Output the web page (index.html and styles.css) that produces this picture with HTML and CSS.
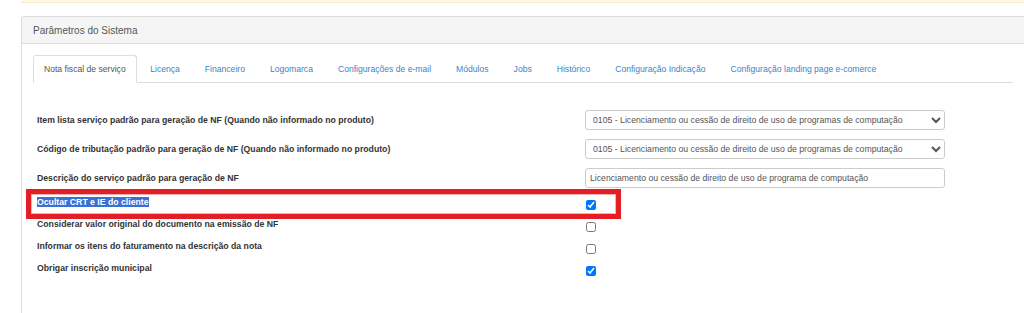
FILE: index.html
```html
<!DOCTYPE html>
<html lang="pt-BR">
<head>
    <meta charset="UTF-8">
    <meta name="viewport" content="width=device-width, initial-scale=1.0">
    <title>Parâmetros do Sistema</title>
    <link rel="stylesheet" href="styles.css">
</head>
<body>
    <div class="alert-strip"></div>

    <div class="panel">
        <div class="panel-heading">
            <span class="panel-title">Parâmetros do Sistema</span>
        </div>
        <div class="panel-body">
            <ul class="nav-tabs">
                <li class="active"><a href="#">Nota fiscal de serviço</a></li>
                <li><a href="#">Licença</a></li>
                <li><a href="#">Financeiro</a></li>
                <li><a href="#">Logomarca</a></li>
                <li><a href="#">Configurações de e-mail</a></li>
                <li><a href="#">Módulos</a></li>
                <li><a href="#">Jobs</a></li>
                <li><a href="#">Histórico</a></li>
                <li><a href="#">Configuração Indicação</a></li>
                <li><a href="#">Configuração landing page e-comerce</a></li>
            </ul>

            <form class="tab-content">
                <div class="form-row">
                    <label for="itemLista">Item lista serviço padrão para geração de NF (Quando não informado no produto)</label>
                    <select id="itemLista">
                        <option>0105 - Licenciamento ou cessão de direito de uso de programas de computação</option>
                    </select>
                </div>
                <div class="form-row">
                    <label for="codTrib">Código de tributação padrão para geração de NF (Quando não informado no produto)</label>
                    <select id="codTrib">
                        <option>0105 - Licenciamento ou cessão de direito de uso de programas de computação</option>
                    </select>
                </div>
                <div class="form-row last-field">
                    <label for="descServico">Descrição do serviço padrão para geração de NF</label>
                    <input type="text" id="descServico" value="Licenciamento ou cessão de direito de uso de programa de computação">
                </div>
                <div class="check-row">
                    <label for="ocultarCrt"><span class="selected-text">Ocultar CRT e IE do cliente</span></label>
                    <input type="checkbox" id="ocultarCrt" checked>
                </div>
                <div class="check-row">
                    <label for="valorOriginal">Considerar valor original do documento na emissão de NF</label>
                    <input type="checkbox" id="valorOriginal">
                </div>
                <div class="check-row">
                    <label for="itensFat">Informar os itens do faturamento na descrição da nota</label>
                    <input type="checkbox" id="itensFat">
                </div>
                <div class="check-row">
                    <label for="inscMunicipal">Obrigar inscrição municipal</label>
                    <input type="checkbox" id="inscMunicipal" checked>
                </div>
            </form>
        </div>
    </div>

    <div class="highlight-box"></div>
</body>
</html>
```

FILE: styles.css
```css
body {
    margin: 0;
    font-family: "Liberation Sans", Arial, sans-serif;
    color: #333;
    background: #fff;
    overflow: hidden;
    position: relative;
    height: 313px;
}
.alert-strip {
    margin-left: 21px;
    height: 2px;
    background-color: #fcf8e3;
    border-bottom: 1px solid #faebcc;
}
.panel {
    margin: 13px 0 0 21px;
    height: 296px;
    border: 1px solid #ddd;
    border-right: none;
    border-bottom: none;
    border-radius: 3px 0 0 0;
}
.panel-heading {
    height: 26px;
    padding: 0 11px;
    background-color: #f5f5f5;
    border-bottom: 1px solid #ddd;
    display: flex;
    align-items: center;
}
.panel-title {
    font-size: 10px;
    color: #555;
}
.panel-body {
    padding: 11px 11px 0 11px;
}
.nav-tabs {
    list-style: none;
    margin: 0;
    padding: 0;
    display: flex;
    border-bottom: 1px solid #ddd;
}
.nav-tabs li {
    margin-right: 2px;
    margin-bottom: -1px;
}
.nav-tabs a {
    display: block;
    padding: 6.5px 10.5px 7.5px;
    line-height: 12px;
    font-size: 8.6px;
    color: #3d84c6;
    text-decoration: none;
    border: 1px solid transparent;
    border-radius: 3px 3px 0 0;
}
.nav-tabs .active a {
    padding-left: 10px;
    padding-right: 10px;
    color: #555;
    background-color: #fff;
    border-color: #ddd;
    border-bottom-color: transparent;
}
.tab-content {
    padding: 27px 0 0 4px;
}
.form-row {
    display: grid;
    grid-template-columns: 548px 360px;
    align-items: center;
    height: 20px;
    margin-bottom: 9px;
}
.form-row.last-field {
    margin-bottom: 4px;
}
label {
    font-size: 8.7px;
    font-weight: bold;
    color: #333;
    line-height: 12px;
}
select,
input[type="text"] {
    font-family: "Liberation Sans", Arial, sans-serif;
    font-size: 8.7px;
    color: #555;
    height: 20px;
    box-sizing: border-box;
    border: 1px solid #ccc;
    border-radius: 3px;
    background-color: #fff;
    margin: 0;
}
select {
    padding: 0 3px;
}
input[type="text"] {
    padding: 0 4px;
}
.check-row {
    display: grid;
    grid-template-columns: 548px 360px;
    align-items: start;
    height: 22px;
}
.check-row label {
    padding-top: 4px;
}
.check-row input[type="checkbox"] {
    width: 9.5px;
    height: 9.5px;
    margin: 8px 0 0 1px;
}
.selected-text {
    background-color: #3b6fd6;
    color: #fff;
}
.highlight-box {
    position: absolute;
    left: 26px;
    top: 189px;
    width: 595px;
    height: 30px;
    box-sizing: border-box;
    border: 5px solid #e41e24;
    box-shadow: inset 0 0 0 1px #f4b3b3;
}
```
